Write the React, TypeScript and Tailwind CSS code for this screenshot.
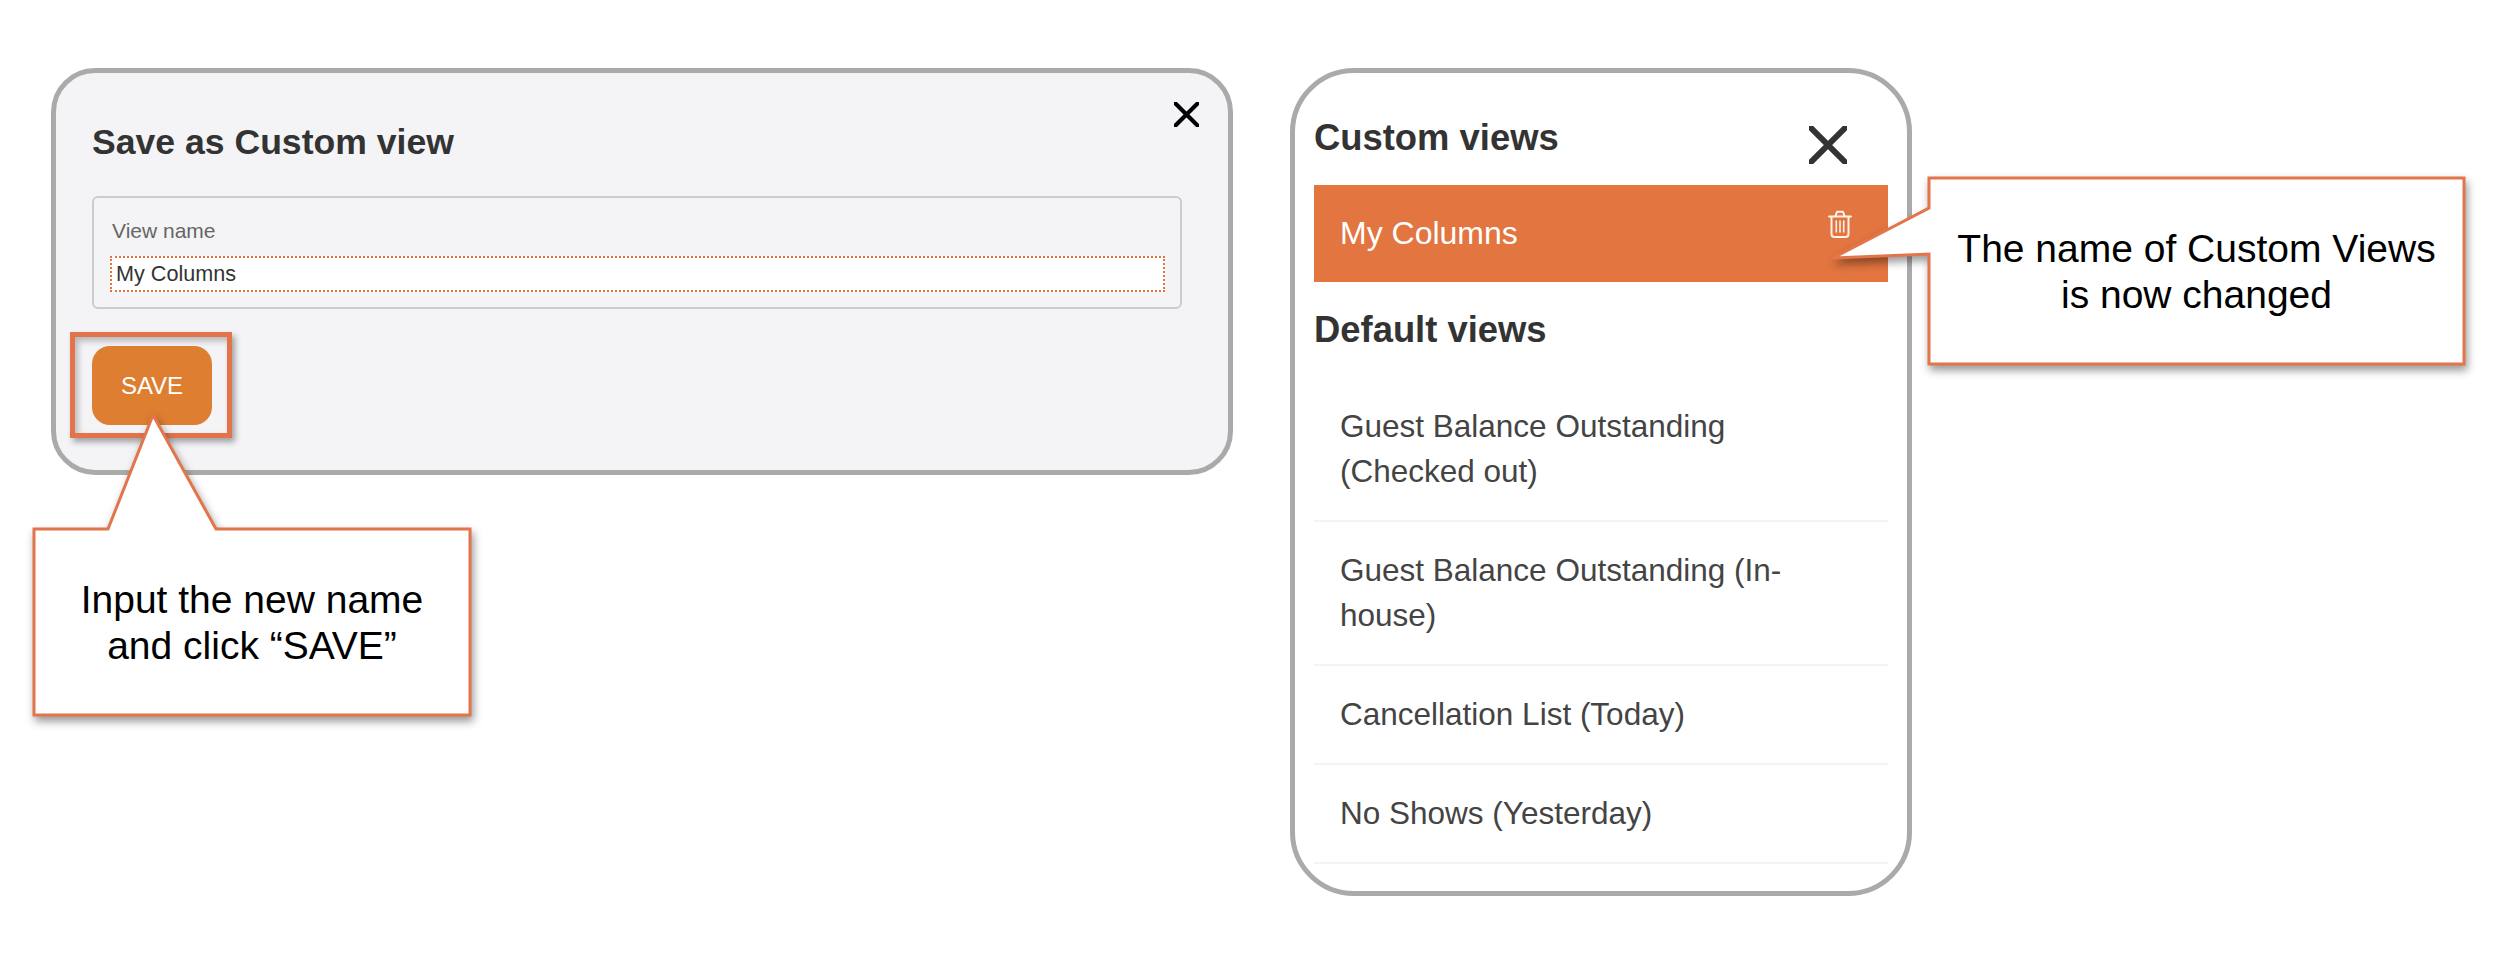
import React from "react";

function CloseIcon({ className, stroke, width }: { className: string; stroke: string; width: number }) {
  return (
    <svg viewBox="0 0 36 36" className={className} fill="none" stroke={stroke} strokeWidth={width} strokeLinecap="round">
      <path d="M2 2 L34 34 M34 2 L2 34" />
    </svg>
  );
}

function TrashIcon() {
  return (
    <svg viewBox="0 0 24 28" className="w-[24px] h-[28px] shrink-0 -mt-[20px]" fill="none" stroke="#ffffff" strokeOpacity="0.9" strokeWidth="2" strokeLinecap="round" strokeLinejoin="round">
      <path d="M1 6.5 H23" />
      <path d="M7.5 6 L9 1.8 H15 L16.500 6" />
      <path d="M3.5 7 V24 Q3.500 27 6.500 27 H17.500 Q20.500 27 20.500 24 V7" />
      <path d="M8.300 11 V22 M12 11 V22 M15.700 11 V22" strokeWidth="1.600" />
    </svg>
  );
}

const items = [
  ["Guest Balance Outstanding", "(Checked out)"],
  ["Guest Balance Outstanding (In-", "house)"],
  ["Cancellation List (Today)"],
  ["No Shows (Yesterday)"],
];

export default function App() {
  return (
    <div className="relative w-[2504px] h-[954px] bg-white overflow-hidden font-['Liberation_Sans',Arial,sans-serif] flex items-start pl-[51px] pt-[68px]">
      {/* Left card */}
      <section className="relative w-[1182px] h-[407px] shrink-0 rounded-[44px] border-[5px] border-[#aaaaaa] bg-[#f4f4f6] pl-[36px] pr-[46px] pt-[49px]">
        <div className="flex justify-between items-start">
          <h2 className="text-[35.600px] leading-[40px] font-bold text-[#333333]">Save as Custom view</h2>
          <CloseIcon className="w-[25px] h-[25px] -mr-[17px] -mt-[20px]" stroke="#000000" width={6} />
        </div>
        <div className="mt-[34px] h-[113px] rounded-[6px] border-2 border-[#cccccd] pl-[16px] pr-[15px] pt-[20px]">
          <div className="pl-[2px] text-[21px] leading-[26px] text-[#666666]">View name</div>
          <input
            readOnly
            value="My Columns"
            className="block mt-[12px] w-full h-[36px] bg-white border-2 border-dotted border-[#e2743f] pl-[4px] text-[21.600px] text-[#333333] outline-none"
          />
        </div>
        <button className="mt-[37px] block w-[120px] h-[79px] rounded-[18px] bg-[#de7e30] text-white text-[24px] leading-[79px] text-center pb-[2px]">
          SAVE
        </button>
        <div className="absolute left-[14px] top-[259px] w-[162px] h-[106px] border-[5px] border-[#e2734a] shadow-[3px_4px_6px_rgba(0,0,0,0.35),inset_3px_4px_6px_rgba(0,0,0,0.25)]" />
      </section>

      {/* Right card */}
      <section className="ml-[57px] w-[622px] h-[828px] shrink-0 rounded-[64px] border-[5px] border-[#aaaaaa] bg-white px-[19px] pt-[45px]">
        <div className="flex justify-between items-start">
          <h2 className="text-[36.400px] leading-[40px] font-bold text-[#333333]">Custom views</h2>
          <CloseIcon className="w-[38px] h-[38px] mr-[41px] mt-[8px]" stroke="#333333" width={5.500} />
        </div>
        <div className="mt-[21px] h-[97px] bg-[#e27540] flex items-center justify-between pl-[26px] pr-[36px] text-white">
          <span className="text-[32px] leading-[45px]">My Columns</span>
          <TrashIcon />
        </div>
        <h2 className="mt-[28px] mb-[28px] text-[36.400px] leading-[40px] font-bold text-[#333333]">Default views</h2>
        <ul>
          {items.map((lines) => (
            <li key={lines[0]} className="border-b-2 border-[#f3f3f3] pl-[26px] py-[26px] text-[31.500px] leading-[45px] text-[#444444]">
              {lines.map((l) => (
                <div key={l}>{l}</div>
              ))}
            </li>
          ))}
        </ul>
      </section>

      {/* Callout: SAVE */}
      <div className="absolute left-[31px] top-[412px] w-[445px] h-[308px]">
        <svg viewBox="0 0 445 308" className="absolute inset-0 w-full h-full drop-shadow-[2px_5px_4px_rgba(0,0,0,0.4)]">
          <path d="M3 117 H77 L122 3 L185 117 H439 V303 H3 Z" fill="#ffffff" stroke="#e2754a" strokeWidth="3" />
        </svg>
        <div className="absolute left-[3px] right-[6px] top-[165px] text-center text-[39px] leading-[46px] text-black">
          <div>Input the new name</div>
          <div>and click “SAVE”</div>
        </div>
      </div>

      {/* Callout: name changed */}
      <div className="absolute left-[1825px] top-[172px] w-[645px] h-[198px]">
        <svg viewBox="0 0 645 198" className="absolute inset-0 w-full h-full drop-shadow-[2px_5px_4px_rgba(0,0,0,0.4)]">
          <path d="M104 6 H639 V192 H104 V82 L8 86 L104 36 Z" fill="#ffffff" stroke="#e2754a" strokeWidth="3" />
        </svg>
        <div className="absolute left-[104px] right-[6px] top-[54px] text-center text-[39px] leading-[46px] text-black">
          <div>The name of Custom Views</div>
          <div>is now changed</div>
        </div>
      </div>
    </div>
  );
}
